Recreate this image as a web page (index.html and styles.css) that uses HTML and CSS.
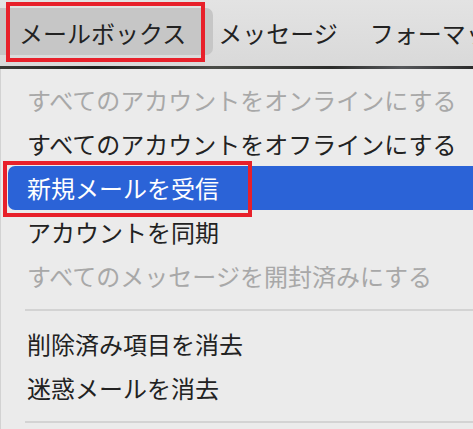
FILE: index.html
```html
<!DOCTYPE html>
<html lang="ja">
<head>
  <meta charset="UTF-8">
  <meta name="viewport" content="width=device-width, initial-scale=1">
  <title>メールボックス</title>
  <link rel="stylesheet" href="styles.css">
</head>
<body>

  <div class="menubar">
    <div class="menubar-item open">メールボックス</div>
    <div class="menubar-item">メッセージ</div>
    <div class="menubar-item">フォーマット</div>
  </div>
  <div class="wallpaper-edge"></div>

  <div class="menu">
    <div class="menu-item disabled">すべてのアカウントをオンラインにする</div>
    <div class="menu-item">すべてのアカウントをオフラインにする</div>
    <div class="menu-item selected">新規メールを受信</div>
    <div class="menu-item">アカウントを同期</div>
    <div class="menu-item disabled">すべてのメッセージを開封済みにする</div>
    <div class="separator"></div>
    <div class="menu-item">削除済み項目を消去</div>
    <div class="menu-item">迷惑メールを消去</div>
    <div class="separator"></div>
  </div>

  <!-- annotation boxes drawn over the screenshot -->
  <div class="mark mark-menubar"></div>
  <div class="mark mark-item"></div>

</body>
</html>
```

FILE: styles.css
```css
* { box-sizing: border-box; }
html, body {
  margin: 0;
  padding: 0;
  overflow: hidden;
}
body {
  font-family: 'Noto Sans CJK JP', 'Noto Sans', sans-serif;
  background: #ebebeb;
  color: #222;
  width: 473px;
  height: 429px;
  position: relative;
}

.menubar {
  height: 66px;
  display: flex;
  align-items: center;
  padding-left: 3px;
  background: linear-gradient(#e3e3e3, #d9d9d9);
  font-size: 24px;
  white-space: nowrap;
  overflow: hidden;
}
.menubar-item {
  position: relative;
  padding: 0 16px;
  line-height: 66px;
}
.menubar-item.open { z-index: 0; }
.menubar-item.open::before {
  content: '';
  position: absolute;
  top: 8px;
  bottom: 11px;
  left: -12px;
  right: -11px;
  background: #c6c6c6;
  border-radius: 7px;
  z-index: -1;
}

.wallpaper-edge {
  height: 3px;
  background: linear-gradient(90deg, #3a3a36, #1e1f1d 20%, #4a4c47 45%, #2b2c2a 70%, #55575a 85%, #2a2a2a);
}

.menu {
  background: #ebebeb;
  padding-top: 9px;
  border-left: 1px solid #d2d2d2;
  font-size: 24px;
  white-space: nowrap;
}
.menu-item {
  height: 44px;
  line-height: 44px;
  padding-left: 26px;
}
.menu-item.disabled { color: #a8a8a8; }
.menu-item.selected {
  background: #2b63d7;
  color: #fff;
  margin-left: 7px;
  margin-right: -12px;
  padding-left: 19px;
  border-radius: 7px;
}
.separator {
  height: 24px;
  display: flex;
  align-items: center;
  margin-left: 24px;
}
.separator::after {
  content: '';
  flex: 1;
  height: 2px;
  background: #d3d3d3;
}

.mark {
  position: absolute;
  border: 4px solid #e8202a;
}
.mark-menubar {
  left: 6px;
  top: 2px;
  width: 199px;
  height: 60px;
}
.mark-item {
  left: 3px;
  top: 161px;
  width: 249px;
  height: 56px;
}
```
